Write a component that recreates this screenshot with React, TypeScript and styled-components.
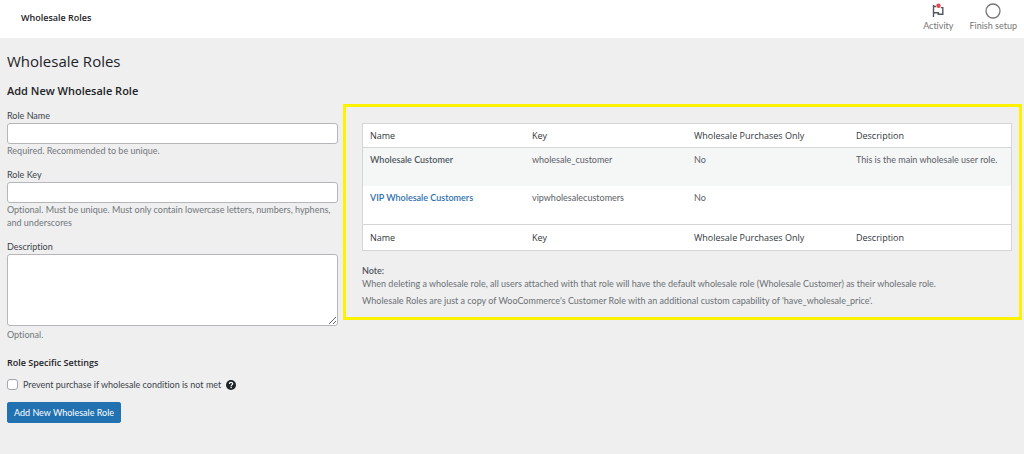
import React, { useId } from "react";
import styled, { createGlobalStyle } from "styled-components";

const headingFont = `"Segoe UI", "Open Sans", sans-serif`;

const GlobalStyle = createGlobalStyle`
  *, *::before, *::after { box-sizing: border-box; }
  body {
    margin: 0;
    background: #efefef;
    color: #3c434a;
    font-family: "Segoe UI", Lato, "Open Sans", sans-serif;
    font-size: 9px;
    font-variant-ligatures: none;
    line-height: 13px;
  }
  h1, h2, h3, p { margin: 0; }
`;

const TopBar = styled.header`
  display: flex;
  align-items: flex-start;
  justify-content: space-between;
  height: 38px;
  padding: 0 7px 0 21px;
  background: #fff;
`;

const TopTitle = styled.div`
  padding-top: 11px;
  color: #1d2327;
  font-family: ${headingFont};
  font-weight: 600;
`;

const TopActions = styled.nav`
  display: flex;
  gap: 16px;
`;

const ActionButton = styled.button`
  display: flex;
  flex-direction: column;
  align-items: center;
  padding: 3px 0 0;
  border: 0;
  background: none;
  color: #757575;
  font: inherit;
  font-variant-ligatures: none;
  cursor: pointer;
`;

const Page = styled.main`
  padding: 13px 2px 24px 7px;
`;

const PageTitle = styled.h1`
  color: #1d2327;
  font-family: ${headingFont};
  font-size: 15px;
  font-weight: 400;
  line-height: 20px;
`;

const SectionTitle = styled.h2`
  margin-top: 12px;
  color: #1d2327;
  font-family: ${headingFont};
  font-size: 11px;
  font-weight: 600;
  line-height: 16px;
`;

const Columns = styled.div`
  display: grid;
  grid-template-columns: minmax(0, 331fr) minmax(0, 679fr);
  gap: 5px;
  align-items: start;
  padding-top: 5px;
`;

const Form = styled.form`
  display: flex;
  flex-direction: column;
  align-items: flex-start;
  padding-top: 5px;
`;

const FieldBlock = styled.div`
  display: flex;
  flex-direction: column;
  width: 100%;
  margin-bottom: 11px;
`;

const FieldLabel = styled.label`
  padding-bottom: 1px;
`;

const TextInput = styled.input`
  width: 100%;
  height: 21px;
  padding: 0 5px;
  border: 1px solid #b4b6b9;
  border-radius: 3px;
  background: #fff;
  font: inherit;
`;

const TextArea = styled.textarea`
  display: block;
  width: 100%;
  height: 72px;
  padding: 2px 5px;
  border: 1px solid #b4b6b9;
  border-radius: 3px;
  background: #fff;
  font: inherit;
  resize: vertical;
`;

const Help = styled.p`
  color: #72777c;

  ${TextArea} + & { padding-top: 2px; }
`;

const SettingsTitle = styled.h3`
  margin-top: 4px;
  color: #1d2327;
  font-family: ${headingFont};
  font-size: 9px;
  font-weight: 600;
`;

const CheckRow = styled.div`
  display: flex;
  align-items: center;
  gap: 5px;
  margin-top: 9px;
`;

const Checkbox = styled.input`
  appearance: none;
  width: 11px;
  height: 11px;
  margin: 0;
  border: 1px solid #a3a6aa;
  border-radius: 3px;
  background: #fff;
  &:checked { background: #2271b1; }
`;

const Submit = styled.button`
  height: 21px;
  margin-top: 11px;
  padding: 0 6px;
  border: 1px solid #2271b1;
  border-radius: 2px;
  background: #2271b1;
  color: #fff;
  font: inherit;
  cursor: pointer;
`;

const Highlight = styled.section`
  padding: 16px 7px 10px 16px;
  border: 3px solid #fff200;
`;

const RoleTable = styled.table`
  width: 100%;
  table-layout: fixed;
  border: 1px solid #d3d5d7;
  border-spacing: 0;
  background: #fff;
  text-align: left;
`;

const HeadCell = styled.th<{ $foot?: boolean }>`
  height: ${(p) => (p.$foot ? 26 : 24)}px;
  padding: 0 7px;
  border-${(p) => (p.$foot ? "top" : "bottom")}: 1px solid #d3d5d7;
  color: #32373c;
  font-family: ${headingFont};
  font-weight: 400;
`;

const BodyRow = styled.tr`
  &:nth-child(odd) { background: #f5f7f7; }
`;

const Cell = styled.td`
  height: 38px;
  padding: 5px 7px;
  color: #5b6066;
  vertical-align: top;
`;

const RoleName = styled.strong`
  color: #50575e;
  font-weight: 600;
`;

const RoleLink = styled.a`
  color: #2e6fae;
  font-weight: 600;
  text-decoration: none;
`;

const Notes = styled.div`
  padding-top: 13px;
  color: #6b7075;
`;

const Note = styled.p`
  & + & { margin-top: 4px; }
`;

const headings = ["Name", "Key", "Wholesale Purchases Only", "Description"];

const roles = [
  { name: "Wholesale Customer", key: "wholesale_customer", only: "No", description: "This is the main wholesale user role.", editable: false },
  { name: "VIP Wholesale Customers", key: "vipwholesalecustomers", only: "No", description: "", editable: true },
];

function FlagIcon() {
  return (
    <svg width="16" height="16" viewBox="0 0 16 16" fill="none" aria-hidden="true">
      <path d="M3.5 2V14M3.5 3.5H6M3.5 9.7H8.3V11.2H12.8V4.6H10.8" stroke="#50575e" strokeWidth="1.4" />
      <circle cx="8.5" cy="2.7" r="2.2" fill="#e2484d" />
    </svg>
  );
}

function ProgressIcon() {
  return (
    <svg width="16" height="16" viewBox="0 0 16 16" fill="none" aria-hidden="true">
      <circle cx="8" cy="8" r="7" stroke="#757575" strokeWidth="1.3" />
    </svg>
  );
}

function HelpIcon() {
  return (
    <svg width="10" height="10" viewBox="0 0 10 10" fill="none" role="img" aria-label="Help">
      <circle cx="5" cy="5" r="5" fill="#1d2327" />
      <path d="M3.4 3.9C3.4 1.9 6.7 1.9 6.7 3.8C6.7 4.9 5.1 4.9 5.1 6.2" stroke="#fff" strokeWidth="1.2" />
      <circle cx="5.1" cy="7.6" r="0.75" fill="#fff" />
    </svg>
  );
}

function Field({ label, help, multiline }: { label: string; help: string; multiline?: boolean }) {
  const id = useId();
  return (
    <FieldBlock>
      <FieldLabel htmlFor={id}>{label}</FieldLabel>
      {multiline ? <TextArea id={id} /> : <TextInput id={id} type="text" />}
      <Help>{help}</Help>
    </FieldBlock>
  );
}

export default function App() {
  return (
    <>
      <GlobalStyle />
      <TopBar>
        <TopTitle>Wholesale Roles</TopTitle>
        <TopActions>
          <ActionButton type="button"><FlagIcon />Activity</ActionButton>
          <ActionButton type="button"><ProgressIcon />Finish setup</ActionButton>
        </TopActions>
      </TopBar>
      <Page>
        <PageTitle>Wholesale Roles</PageTitle>
        <SectionTitle>Add New Wholesale Role</SectionTitle>
        <Columns>
          <Form onSubmit={(e) => e.preventDefault()}>
            <Field label="Role Name" help="Required. Recommended to be unique." />
            <Field
              label="Role Key"
              help="Optional. Must be unique. Must only contain lowercase letters, numbers, hyphens, and underscores"
            />
            <Field label="Description" help="Optional." multiline />
            <SettingsTitle>Role Specific Settings</SettingsTitle>
            <CheckRow>
              <Checkbox type="checkbox" id="prevent-purchase" />
              <label htmlFor="prevent-purchase">Prevent purchase if wholesale condition is not met</label>
              <HelpIcon />
            </CheckRow>
            <Submit type="submit">Add New Wholesale Role</Submit>
          </Form>
          <Highlight>
            <RoleTable>
              <thead>
                <tr>{headings.map((h) => <HeadCell key={h} scope="col">{h}</HeadCell>)}</tr>
              </thead>
              <tbody>
                {roles.map((r) => (
                  <BodyRow key={r.key}>
                    <Cell>{r.editable ? <RoleLink href="#edit">{r.name}</RoleLink> : <RoleName>{r.name}</RoleName>}</Cell>
                    <Cell>{r.key}</Cell>
                    <Cell>{r.only}</Cell>
                    <Cell>{r.description}</Cell>
                  </BodyRow>
                ))}
              </tbody>
              <tfoot>
                <tr>{headings.map((h) => <HeadCell key={h} scope="col" $foot>{h}</HeadCell>)}</tr>
              </tfoot>
            </RoleTable>
            <Notes>
              <RoleName>Note:</RoleName>
              <Note>
                When deleting a wholesale role, all users attached with that role will have the default wholesale role
                (Wholesale Customer) as their wholesale role.
              </Note>
              <Note>
                Wholesale Roles are just a copy of WooCommerce's Customer Role with an additional custom capability of
                'have_wholesale_price'.
              </Note>
            </Notes>
          </Highlight>
        </Columns>
      </Page>
    </>
  );
}
